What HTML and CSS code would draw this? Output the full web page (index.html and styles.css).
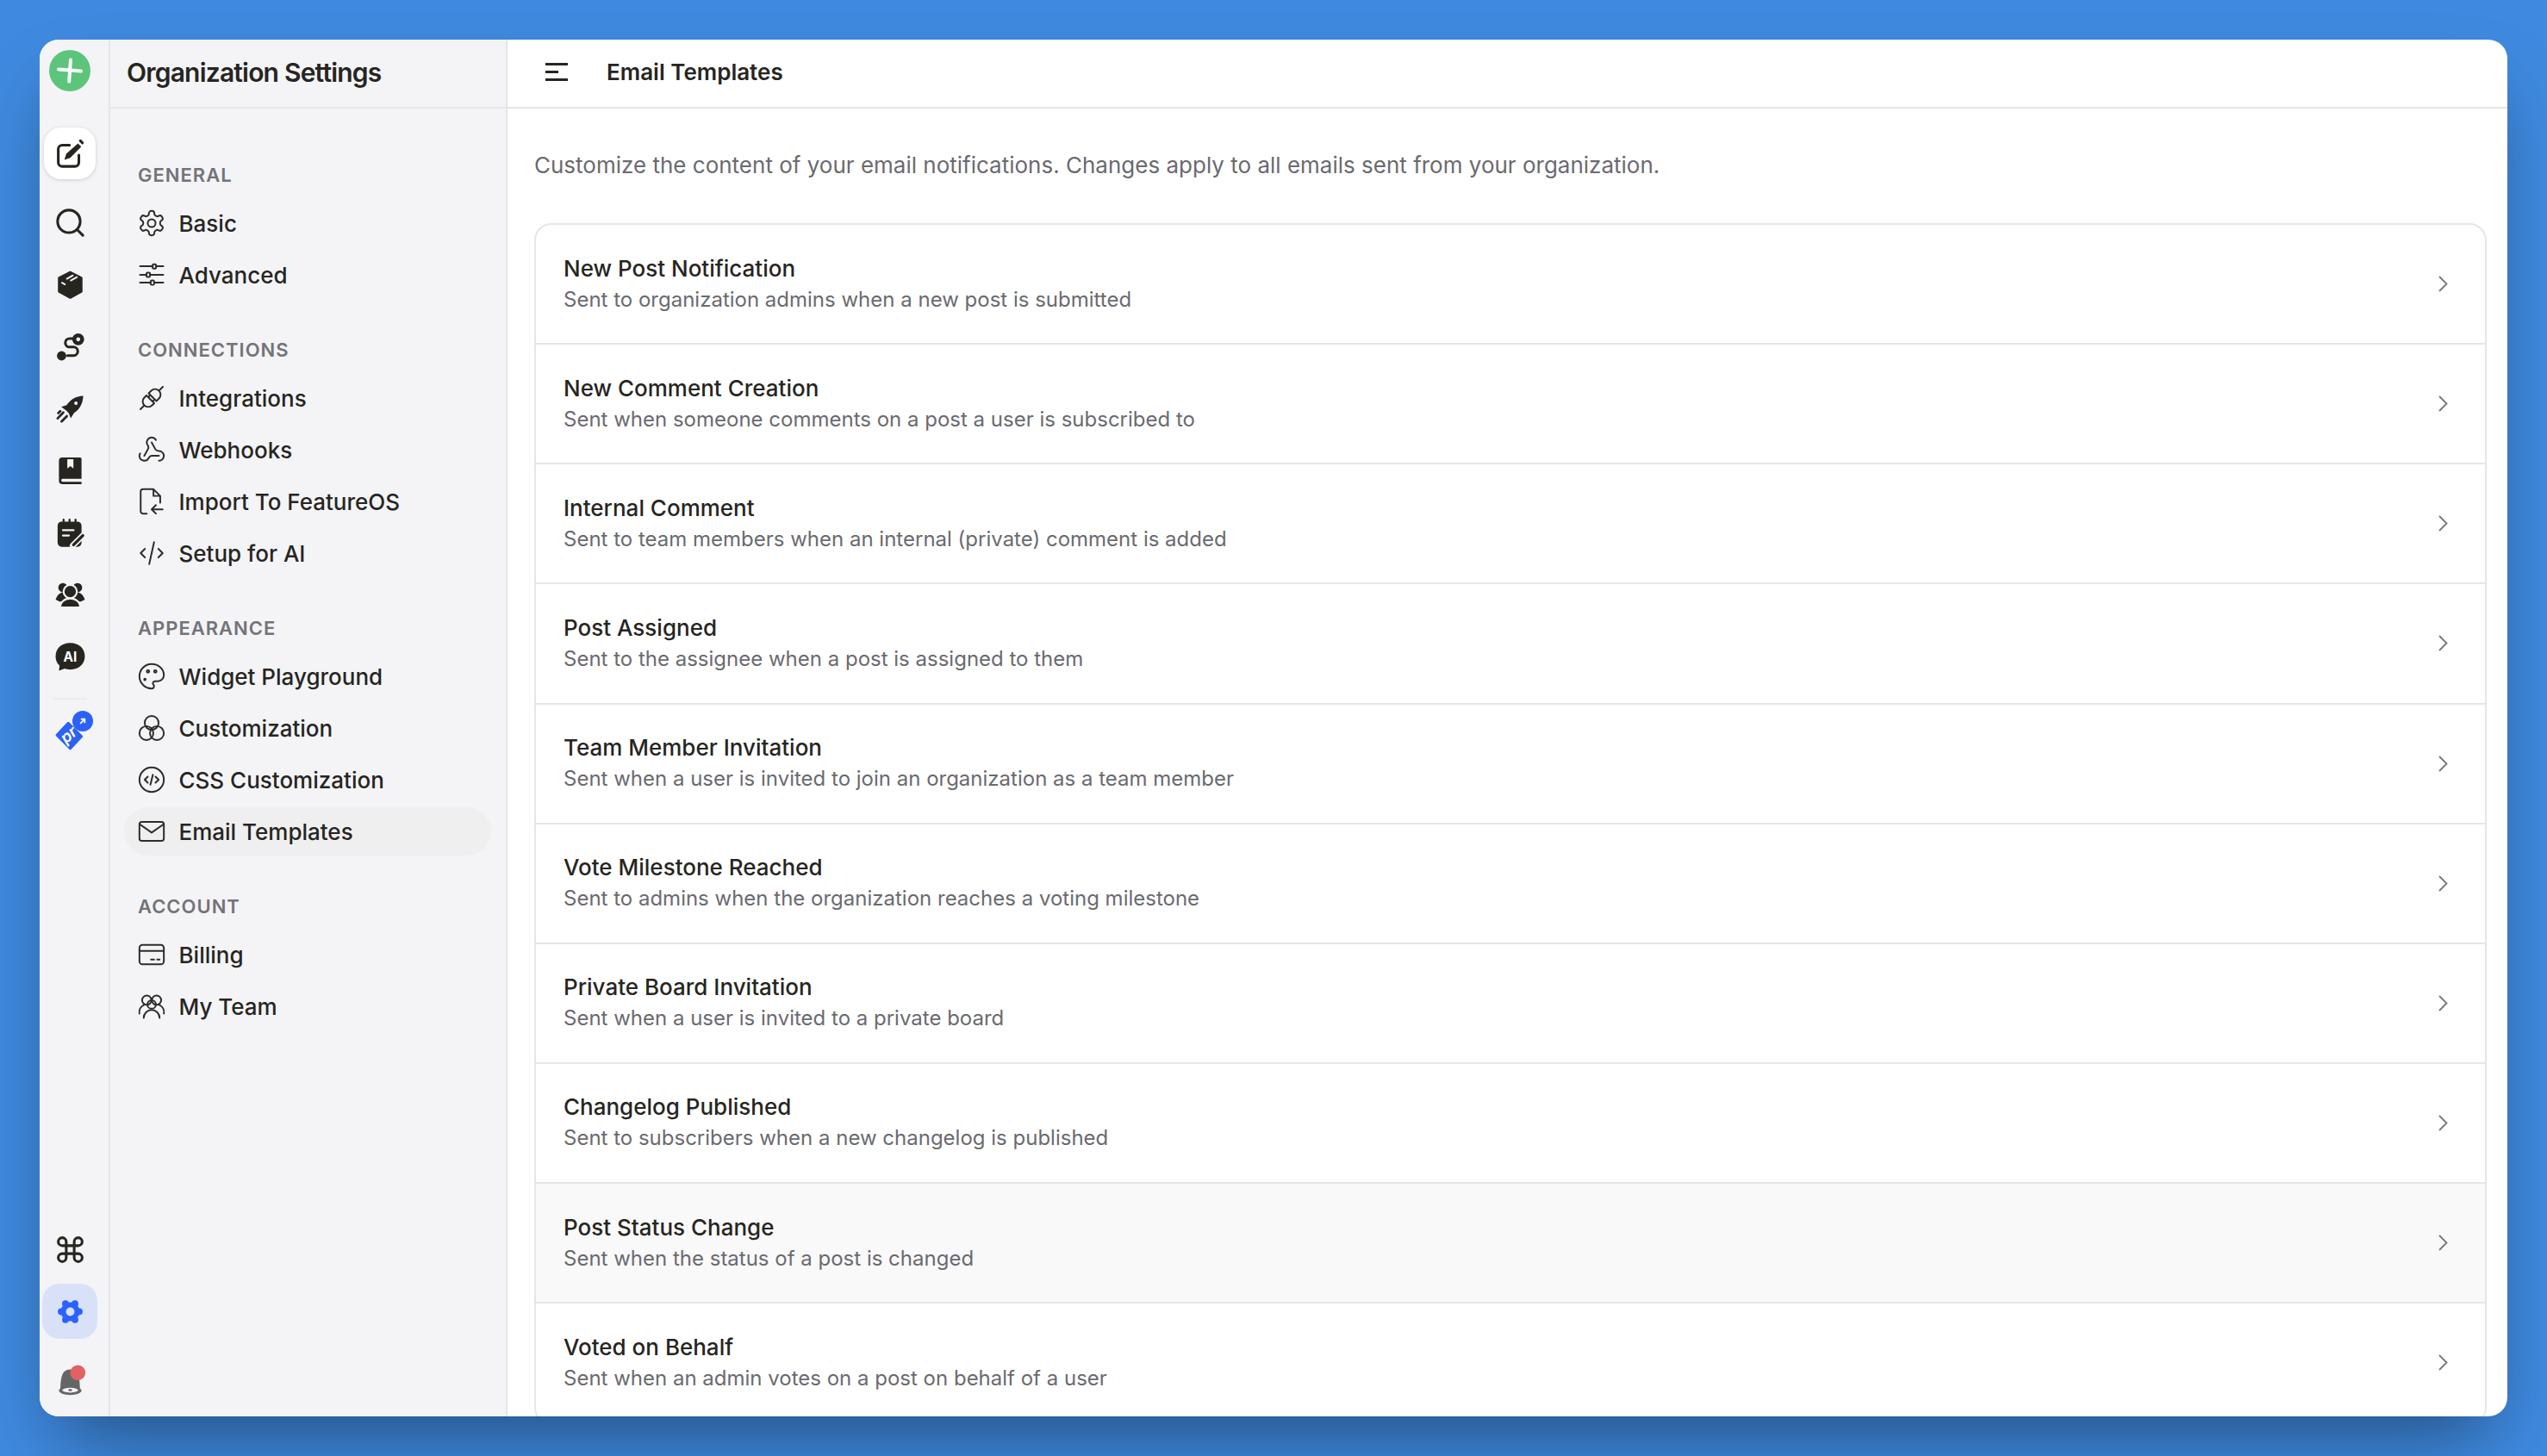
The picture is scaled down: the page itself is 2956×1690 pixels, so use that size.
FILE: index.html
```html
<!DOCTYPE html>
<html lang="en">
<head>
    <meta charset="UTF-8">
    <title>Email Templates</title>
    <link rel="stylesheet" href="styles.css">
</head>
<body>
<div class="window">
    <div class="rail">
        <svg class="logo" viewBox="0 0 48 48"><circle cx="24" cy="24" r="24" fill="#5cc57b"/><path d="M25 11.500 23.200 36.500M11 22.500 37 24.500" stroke="#fff" stroke-width="4" stroke-linecap="round"/></svg>
        <div class="rail-btn rail-btn-white">
            <svg class="icon" viewBox="0 0 24 24"><path class="ln" d="M11.500 5.500H6a3 3 0 0 0-3 3V18.500a3 3 0 0 0 3 3h9.500a3 3 0 0 0 3-3V13"/><path class="fl" d="M17.800 4.200 20.300 6.700 12 15 7.600 16.500 9 12z"/><path class="ln" d="M19.600 2.200 21.200 3.800" stroke-width="1.400"/></svg>
        </div>
        <div class="rail-item"><svg class="icon" viewBox="0 0 24 24"><circle class="ln" cx="11" cy="11" r="8.500"/><path class="ln" d="M17.200 17.200 21.500 21.500"/></svg></div>
        <div class="rail-item"><svg class="icon" viewBox="0 0 24 24"><path class="fl" stroke="#26251f" stroke-width="1.500" stroke-linejoin="round" d="M12 2.500 20.500 6.800V17.200L12 21.800 3.500 17.200V6.800z"/><path d="M9.500 7.500 14 5M12.500 8.800 17 6.300M5.800 10.500 8 11.700" stroke="#f4f4f7" stroke-width="1.300" stroke-linecap="round"/></svg></div>
        <div class="rail-item"><svg class="icon" viewBox="0 0 24 24"><circle class="fl" cx="5.500" cy="18.800" r="3.500"/><circle cx="18" cy="6.400" r="3" fill="none" stroke="#26251f" stroke-width="3"/><path class="ln" d="M14 5.800H11.500a3.200 3.200 0 0 0 0 6.400h3a3.200 3.200 0 0 1 0 6.400H10"/></svg></div>
        <div class="rail-item"><svg class="icon" viewBox="0 0 24 24"><path class="fl" d="M21.800 2.200c-5.500.2-9.700 2.800-12.500 7L5.300 10.500l3.900 3 1.700 1.800 1.500 3.900 2.500-4.200c4.600-3 6.600-7.300 6.900-12.800z"/><circle cx="16.300" cy="7.800" r="1.300" fill="#f4f4f7"/><path d="M6.800 14.800 2.500 19.200M9.500 17.500 5.500 21.500M4.500 13.800 3 15.300" stroke="#26251f" stroke-width="1.800" stroke-linecap="round"/></svg></div>
        <div class="rail-item"><svg class="icon" viewBox="0 0 24 24"><path class="fl" d="M6 2h13.500a1 1 0 0 1 1 1v15H6.300a1 1 0 0 0 0 2.200h14.200V22H6a2.500 2.500 0 0 1-2.500-2.500v-15A2.500 2.500 0 0 1 6 2z"/><path d="M9.800 3.200h4.600v7l-2.300-1.700-2.300 1.700z" fill="#f4f4f7"/></svg></div>
        <div class="rail-item"><svg class="icon" viewBox="0 0 24 24"><path class="fl" d="M5.500 3.500h12a3 3 0 0 1 3 3v13a3 3 0 0 1-3 3h-12a3 3 0 0 1-3-3v-13a3 3 0 0 1 3-3z"/><path d="M7 2v3M11.500 2v3M16 2v3" stroke="#26251f" stroke-width="1.500" stroke-linecap="round"/><path d="M6.500 10h8M6.500 14h4.500" stroke="#f4f4f7" stroke-width="1.500" stroke-linecap="round"/><path d="M14 21.500 21.500 14" stroke="#f4f4f7" stroke-width="4.500" stroke-linecap="round"/><path d="M14.500 21 21.500 14" stroke="#26251f" stroke-width="2.200" stroke-linecap="round"/></svg></div>
        <div class="rail-item"><svg class="icon" viewBox="0 0 24 24"><circle class="fl" cx="6.500" cy="6.500" r="3.500"/><circle class="fl" cx="17.500" cy="6.500" r="3.500"/><path class="fl" d="M1 15.500c1-3 3-5.500 6-5.500h10c3 0 5 2.500 6 5.500l-3 1.500H4z"/><circle class="fl" cx="12" cy="9.500" r="5" stroke="#f4f4f7" stroke-width="1.400"/><path class="fl" stroke="#f4f4f7" stroke-width="1.400" d="M4.500 21.500c0-4.200 3.200-6.800 7.500-6.800s7.500 2.600 7.500 6.800z"/></svg></div>
        <div class="rail-item"><svg class="icon" viewBox="0 0 24 24"><path class="fl" d="M12 1.500c6.500 0 11 4.200 11 10S18.500 21.500 12 21.500c-1.500 0-3-.2-4.200-.7L3.500 22.300 4 18.500C2 16.800 1 14.500 1 11.500c0-5.800 4.500-10 11-10z"/><text class="ai-text" x="12" y="15.400" text-anchor="middle">AI</text></svg></div>
        <div class="rail-sep"></div>
        <div class="rail-item rail-pro">
            <svg class="icon icon-pro" viewBox="0 0 24 24"><path d="M10.500 3.500 20.500 13.500 12 22.500 2 12.500z" fill="#2b62f5" stroke="#2b62f5" stroke-width="2" stroke-linejoin="round"/><text class="pro-text" x="11.500" y="16" text-anchor="middle" transform="rotate(-40 11.500 13)">pr</text></svg>
            <span class="pro-badge"><svg viewBox="0 0 24 24"><path d="M8 16 16 8M9.500 8H16V14.500" fill="none" stroke="#fff" stroke-width="3" stroke-linecap="round" stroke-linejoin="round"/></svg></span>
        </div>
        <div class="rail-bottom">
            <div class="rail-item"><svg class="icon" viewBox="0 0 24 24"><path class="ln" d="M15 6v12a3 3 0 1 0 3-3H6a3 3 0 1 0 3 3V6a3 3 0 1 0-3 3h12a3 3 0 1 0-3-3"/></svg></div>
            <div class="rail-tile"><svg class="icon icon-gear" viewBox="0 0 24 24"><circle cx="12" cy="12" r="7.500" fill="#2962ff"/><circle cx="4.800" cy="12" r="2.700" fill="#2962ff"/><circle cx="19.200" cy="12" r="2.700" fill="#2962ff"/><circle cx="8.200" cy="5.600" r="2.700" fill="#2962ff"/><circle cx="15.800" cy="5.600" r="2.700" fill="#2962ff"/><circle cx="8.200" cy="18.400" r="2.700" fill="#2962ff"/><circle cx="15.800" cy="18.400" r="2.700" fill="#2962ff"/><circle cx="12" cy="12" r="3.400" fill="#d9e1f9"/></svg></div>
            <div class="rail-item"><svg class="icon" viewBox="0 0 24 24"><path d="M4.500 19C5 11 5 3.500 12 3.500S19 11 19.500 19z" fill="#666"/><ellipse cx="12" cy="19.500" rx="8.500" ry="3.300" fill="#666"/><ellipse cx="12" cy="19.200" rx="6" ry="1.800" fill="#f4f4f7"/><ellipse cx="12" cy="19.200" rx="1.500" ry=".8" fill="#666"/><circle cx="17.700" cy="6" r="5.700" fill="#e06262"/></svg></div>
        </div>
    </div>

    <div class="sidebar">
        <div class="sidebar-head">Organization Settings</div>
        <div class="nav">
            <div class="nav-label">GENERAL</div>
            <div class="nav-item"><svg class="nav-icon" viewBox="0 0 24 24"><path d="M12.220 2h-.44a2 2 0 0 0-2 2v.18a2 2 0 0 1-1 1.730l-.43.250a2 2 0 0 1-2 0l-.15-.08a2 2 0 0 0-2.730.730l-.22.380a2 2 0 0 0 .73 2.730l.15.100a2 2 0 0 1 1 1.720v.510a2 2 0 0 1-1 1.740l-.15.090a2 2 0 0 0-.73 2.730l.22.380a2 2 0 0 0 2.730.730l.15-.08a2 2 0 0 1 2 0l.43.250a2 2 0 0 1 1 1.730V20a2 2 0 0 0 2 2h.44a2 2 0 0 0 2-2v-.18a2 2 0 0 1 1-1.730l.43-.25a2 2 0 0 1 2 0l.15.080a2 2 0 0 0 2.730-.73l.22-.39a2 2 0 0 0-.73-2.730l-.15-.08a2 2 0 0 1-1-1.740v-.5a2 2 0 0 1 1-1.740l.15-.09a2 2 0 0 0 .73-2.730l-.22-.38a2 2 0 0 0-2.730-.73l-.15.080a2 2 0 0 1-2 0l-.43-.25a2 2 0 0 1-1-1.730V4a2 2 0 0 0-2-2z"/><circle cx="12" cy="12" r="3.200"/></svg>Basic</div>
            <div class="nav-item"><svg class="nav-icon" viewBox="0 0 24 24"><path d="M2.500 5H12.800M16 5H21.500M2.500 12H7.800M11 12H21.500M2.500 18.400H11.200M14.400 18.400H21.500"/><rect x="12.800" y="3.300" width="2.800" height="3.600" rx=".8"/><rect x="7.800" y="10.200" width="2.800" height="3.600" rx=".8"/><rect x="11.200" y="16.600" width="2.800" height="3.600" rx=".8"/></svg>Advanced</div>

            <div class="nav-label nav-label-next">CONNECTIONS</div>
            <div class="nav-item"><svg class="nav-icon" viewBox="0 0 24 24"><g transform="rotate(-45 12 12)"><path d="M-1 12H3.500M10.500 7.500H8a4.500 4.500 0 0 0 0 9h2.500zM10.500 9.500H13M10.500 14.500H13M13 7.500h3a4.500 4.500 0 0 1 0 9h-3zM20.500 12H25"/></g></svg>Integrations</div>
            <div class="nav-item"><svg class="nav-icon" viewBox="0 0 24 24"><path d="M18 16.980h-5.990c-1.100 0-1.950.94-2.480 1.900A4 4 0 0 1 2 17c.01-.7.2-1.400.57-2"/><path d="m6 17 3.130-5.780c.53-.97.1-2.180-.5-3.100a4 4 0 1 1 6.890-4.060"/><path d="m12 6 3.130 5.730C15.660 12.700 16.900 13 18 13a4 4 0 0 1 0 8"/></svg>Webhooks</div>
            <div class="nav-item"><svg class="nav-icon" viewBox="0 0 24 24"><path d="M19 13V7.500L13.500 2H5a2 2 0 0 0-2 2V20a2 2 0 0 0 2 2H8M13.500 2V7.500H19M21 18.500H12M15.500 15 12 18.500 15.500 22"/></svg>Import To FeatureOS</div>
            <div class="nav-item"><svg class="nav-icon" viewBox="0 0 24 24"><path d="m6.500 8.500-3.500 3.500 3.500 3.500M17.500 8.500l3.500 3.500-3.500 3.500M14 3l-4 18"/></svg>Setup for AI</div>

            <div class="nav-label nav-label-next">APPEARANCE</div>
            <div class="nav-item"><svg class="nav-icon" viewBox="0 0 24 24"><path d="M12 22a1 1 0 0 1 0-20 10 9 0 0 1 10 9 5 5 0 0 1-5 5h-2.250a1.750 1.750 0 0 0-1.400 2.800l.3.4a1.750 1.750 0 0 1-1.400 2.800z"/><circle cx="9" cy="8" r="1"/><circle cx="15" cy="8" r="1"/><circle cx="6.500" cy="14.500" r=".6"/></svg>Widget Playground</div>
            <div class="nav-item"><svg class="nav-icon" viewBox="0 0 24 24"><circle cx="12" cy="7.800" r="5.700"/><circle cx="7.700" cy="16.200" r="5.700"/><circle cx="16.300" cy="16.200" r="5.700"/></svg>Customization</div>
            <div class="nav-item"><svg class="nav-icon" viewBox="0 0 24 24"><circle cx="12" cy="12" r="10"/><path d="m8.800 9.500-2.500 2.500 2.500 2.500M15.200 9.500l2.500 2.500-2.500 2.500M13 8l-2 8"/></svg>CSS Customization</div>
            <div class="nav-item nav-active"><svg class="nav-icon" viewBox="0 0 24 24"><rect x="2" y="4.200" width="20" height="15.600" rx="2"/><path d="m2 6 10 7 10-7"/></svg>Email Templates</div>

            <div class="nav-label nav-label-next">ACCOUNT</div>
            <div class="nav-item"><svg class="nav-icon" viewBox="0 0 24 24"><rect x="2" y="4" width="20" height="16" rx="2.500"/><path d="M2 9H22M11.500 16h2.500M16.500 16h2"/></svg>Billing</div>
            <div class="nav-item"><svg class="nav-icon" viewBox="0 0 24 24"><circle cx="8" cy="7" r="3.800"/><circle cx="16" cy="7" r="3.800"/><circle cx="12" cy="10.500" r="3.500"/><path d="M5.500 21.500a6.500 6.500 0 0 1 13 0M2 18a6.500 6.500 0 0 1 3.500-7M22 18a6.500 6.500 0 0 0-3.500-7"/></svg>My Team</div>
        </div>
    </div>

    <div class="main">
        <div class="main-head">
            <svg class="burger" viewBox="0 0 26 21"><path d="M0 1.500H26M0 10.500H15M0 19.500H26"/></svg>
            <span class="main-title">Email Templates</span>
        </div>
        <div class="content">
            <p class="intro">Customize the content of your email notifications. Changes apply to all emails sent from your organization.</p>
            <div class="card">
                <div class="row"><div><div class="row-title">New Post Notification</div><div class="row-sub">Sent to organization admins when a new post is submitted</div></div><svg class="chev" viewBox="0 0 11 19"><path d="M1 1 9.500 9.500 1 18"/></svg></div>
                <div class="row"><div><div class="row-title">New Comment Creation</div><div class="row-sub">Sent when someone comments on a post a user is subscribed to</div></div><svg class="chev" viewBox="0 0 11 19"><path d="M1 1 9.500 9.500 1 18"/></svg></div>
                <div class="row"><div><div class="row-title">Internal Comment</div><div class="row-sub">Sent to team members when an internal (private) comment is added</div></div><svg class="chev" viewBox="0 0 11 19"><path d="M1 1 9.500 9.500 1 18"/></svg></div>
                <div class="row"><div><div class="row-title">Post Assigned</div><div class="row-sub">Sent to the assignee when a post is assigned to them</div></div><svg class="chev" viewBox="0 0 11 19"><path d="M1 1 9.500 9.500 1 18"/></svg></div>
                <div class="row"><div><div class="row-title">Team Member Invitation</div><div class="row-sub">Sent when a user is invited to join an organization as a team member</div></div><svg class="chev" viewBox="0 0 11 19"><path d="M1 1 9.500 9.500 1 18"/></svg></div>
                <div class="row"><div><div class="row-title">Vote Milestone Reached</div><div class="row-sub">Sent to admins when the organization reaches a voting milestone</div></div><svg class="chev" viewBox="0 0 11 19"><path d="M1 1 9.500 9.500 1 18"/></svg></div>
                <div class="row"><div><div class="row-title">Private Board Invitation</div><div class="row-sub">Sent when a user is invited to a private board</div></div><svg class="chev" viewBox="0 0 11 19"><path d="M1 1 9.500 9.500 1 18"/></svg></div>
                <div class="row"><div><div class="row-title">Changelog Published</div><div class="row-sub">Sent to subscribers when a new changelog is published</div></div><svg class="chev" viewBox="0 0 11 19"><path d="M1 1 9.500 9.500 1 18"/></svg></div>
                <div class="row row-hover"><div><div class="row-title">Post Status Change</div><div class="row-sub">Sent when the status of a post is changed</div></div><svg class="chev" viewBox="0 0 11 19"><path d="M1 1 9.500 9.500 1 18"/></svg></div>
                <div class="row"><div><div class="row-title">Voted on Behalf</div><div class="row-sub">Sent when an admin votes on a post on behalf of a user</div></div><svg class="chev" viewBox="0 0 11 19"><path d="M1 1 9.500 9.500 1 18"/></svg></div>
            </div>
        </div>
    </div>
</div>
</body>
</html>
```

FILE: styles.css
```css
* {
    box-sizing: border-box;
}
html, body {
    height: 1690px;
}
body {
    margin: 0;
    padding: 46px;
    overflow: hidden;
    background-color: #3f8ae0;
    font-family: Inter, "Liberation Sans", sans-serif;
    color: #26251f;
}
.window {
    display: flex;
    height: 1598px;
    background-color: #fff;
    border-radius: 22px;
    overflow: hidden;
    box-shadow: 0 44px 88px -21px rgba(0, 0, 0, .42);
}

/* icon rail */
.rail {
    width: 82px;
    flex-shrink: 0;
    display: flex;
    flex-direction: column;
    align-items: center;
    padding: 12px 10px 6px 0;
    background-color: #f4f4f7;
    border-right: 2px solid #e6e6e8;
}
.logo {
    width: 48px;
    height: 48px;
    margin-bottom: 42px;
    flex-shrink: 0;
}
.icon {
    width: 37px;
    height: 37px;
}
.icon-gear {
    width: 35px;
    height: 35px;
}
.ln {
    fill: none;
    stroke: #26251f;
    stroke-width: 2;
    stroke-linecap: round;
    stroke-linejoin: round;
}
.fl {
    fill: #26251f;
}
.rail-btn {
    width: 60px;
    height: 60px;
    display: flex;
    align-items: center;
    justify-content: center;
    margin-bottom: 14px;
    flex-shrink: 0;
}
.rail-btn-white {
    background-color: #fff;
    border-radius: 20px;
    box-shadow: 0 1px 4px rgba(0, 0, 0, .16);
}
.rail-item {
    position: relative;
    width: 64px;
    height: 72px;
    display: flex;
    align-items: center;
    justify-content: center;
    flex-shrink: 0;
}
.rail-sep {
    width: 39px;
    height: 2px;
    margin: 12px 0 2px;
    background-color: #ececee;
    flex-shrink: 0;
}
.icon-pro {
    margin-top: 4px;
}
.pro-badge {
    position: absolute;
    top: 11px;
    left: 35px;
    width: 24px;
    height: 24px;
    border-radius: 50%;
    background-color: #2b62f5;
    padding: 5px;
    display: flex;
}
.ai-text {
    fill: #fff;
    font-size: 10px;
    font-weight: 700;
}
.pro-text {
    fill: #fff;
    font-size: 12px;
    font-style: italic;
    font-weight: 600;
}
.rail-bottom {
    margin-top: auto;
    display: flex;
    flex-direction: column;
    align-items: center;
}
.rail-tile {
    width: 64px;
    height: 64px;
    margin: 4px 0 12px;
    border-radius: 20px;
    background-color: #d9e1f9;
    display: flex;
    align-items: center;
    justify-content: center;
}

/* settings sidebar */
.sidebar {
    width: 461px;
    flex-shrink: 0;
    background-color: #f4f4f7;
    border-right: 2px solid #e6e6e8;
}
.sidebar-head {
    height: 80px;
    padding: 0 0 3px 19px;
    display: flex;
    align-items: center;
    font-size: 30px;
    font-weight: 600;
    letter-spacing: -.8px;
    border-bottom: 2px solid #e6e6e8;
}
.nav {
    padding: 57px 17px 0 16px;
}
.nav-label {
    height: 40px;
    margin-bottom: 8px;
    padding-left: 16px;
    display: flex;
    align-items: center;
    font-size: 22px;
    font-weight: 600;
    letter-spacing: 1px;
    color: #737378;
}
.nav-label-next {
    margin-top: 39px;
}
.nav-item {
    height: 56px;
    margin-bottom: 4px;
    padding-left: 15px;
    display: flex;
    align-items: center;
    gap: 14.5px;
    border-radius: 28px;
    font-size: 26px;
    font-weight: 500;
}
.nav-active {
    background-color: #efeff0;
}
.nav-icon {
    width: 34px;
    height: 34px;
    fill: none;
    stroke: #2c2c29;
    stroke-width: 1.400;
    stroke-linecap: round;
    stroke-linejoin: round;
    flex-shrink: 0;
}

/* main column */
.main {
    flex: 1;
    min-width: 0;
}
.main-head {
    height: 80px;
    padding: 0 0 3px 44px;
    display: flex;
    align-items: center;
    border-bottom: 2px solid #e6e6e8;
}
.burger {
    width: 26px;
    height: 21px;
    margin-right: 45px;
    fill: none;
    stroke: #26251f;
    stroke-width: 3;
}
.main-title {
    font-size: 26px;
    font-weight: 600;
}
.content {
    padding: 46px 24px 0 31px;
}
.intro {
    margin: 0 0 47px;
    height: 40px;
    line-height: 40px;
    font-size: 26px;
    color: #6a6a70;
}
.card {
    border: 2px solid #e6e6e8;
    border-radius: 20px;
    overflow: hidden;
}
.row {
    height: 139.140px;
    padding: 0 43px 0 32px;
    display: flex;
    align-items: center;
    justify-content: space-between;
    border-bottom: 2px solid #e6e6e8;
}
.row-hover {
    background-color: #f9f9f9;
}
.row-title {
    height: 36px;
    line-height: 36px;
    font-size: 26px;
    font-weight: 500;
}
.row-sub {
    height: 36px;
    line-height: 36px;
    font-size: 24px;
    color: #6a6a70;
}
.chev {
    width: 11px;
    height: 19px;
    fill: none;
    stroke: #77777a;
    stroke-width: 1.800;
}
```
